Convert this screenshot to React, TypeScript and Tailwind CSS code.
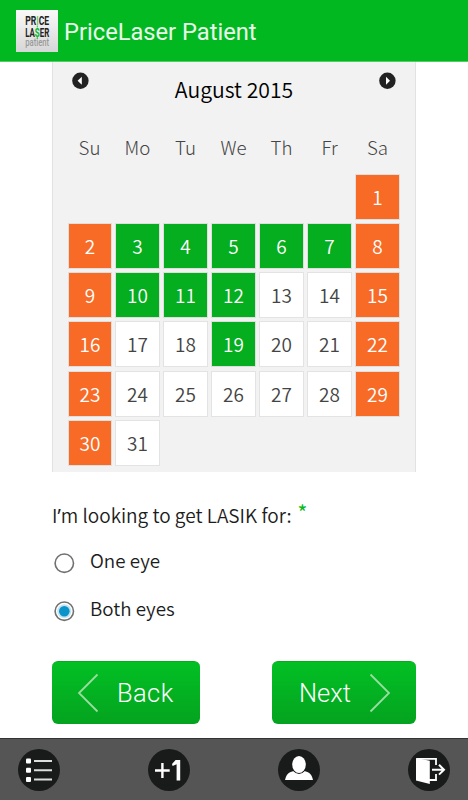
import type { ReactNode } from 'react';

const cjk = "font-['Noto_Sans_CJK_SC','Noto_Sans',sans-serif]";
const closed = [1, 2, 8, 9, 15, 16, 22, 23, 29, 30];
const open = [3, 4, 5, 6, 7, 10, 11, 12, 19];

function Logo() {
  return (
    <svg width="42" height="42" viewBox="0 0 42 42" className="shrink-0">
      <defs>
        <linearGradient id="tile" x1="0" y1="0" x2="0" y2="1">
          <stop offset="0" stopColor="#fafafa" />
          <stop offset="1" stopColor="#d6d6d6" />
        </linearGradient>
      </defs>
      <rect width="42" height="42" fill="url(#tile)" />
      <g fontFamily="'Roboto', sans-serif" fontWeight="700" fontSize="13.5" fill="#222">
        <text x="9.2" y="15" textLength="24" lengthAdjust="spacingAndGlyphs">
          PR<tspan fill="#20c541" fontWeight="400">I</tspan>CE
        </text>
        <text x="9.2" y="27" textLength="24" lengthAdjust="spacingAndGlyphs">
          LA<tspan fill="#08b92a">S</tspan>ER
        </text>
        <text x="9.2" y="36" fontSize="11" fontWeight="500" textLength="24" lengthAdjust="spacingAndGlyphs" fill="#999">patient</text>
      </g>
      <path d="M21.3 15.5V17.5M21.3 27V29" stroke="#20c541" strokeWidth="1" />
    </svg>
  );
}

function MonthArrow({ next = false }: { next?: boolean }) {
  return (
    <svg width="18" height="18" viewBox="0 0 18 18">
      <circle cx={next ? 8.4 : 9.4} cy="8.8" r="8.2" fill="#222" />
      <path d={next ? 'M7 4.8V12.8L11 8.8Z' : 'M10.8 4.8V12.8L6.6 8.8Z'} fill="#fff" />
    </svg>
  );
}

function Day({ day }: { day: number }) {
  const tone = closed.includes(day)
    ? 'bg-[#f76b27] text-white border-[#e2dedc]'
    : open.includes(day)
      ? 'bg-[#04ae1e] text-white border-[#dcdfdc]'
      : 'bg-white text-[#444] border-[#e3e3e3]';
  return (
    <div className={`flex h-[46px] items-center justify-center border-[1.5px] pb-px text-[19px] leading-none ${tone}`}>
      {day}
    </div>
  );
}

function Radio({ label, checked = false }: { label: string; checked?: boolean }) {
  return (
    <label className="flex h-12 items-center">
      <svg width="22" height="22" viewBox="0 0 22 22" className="mt-[3px] ml-px">
        <circle cx="11.3" cy="11.2" r="9.2" fill="#fff" stroke="#707070" strokeWidth="1.6" />
        {checked && <circle cx="11.3" cy="11.2" r="7" fill="#c5e4f0" />}
        {checked && <circle cx="11.3" cy="11.2" r="5.3" fill="#0a94ca" />}
      </svg>
      <span className="ml-[15px] pb-px text-[18.8px] leading-none">{label}</span>
    </label>
  );
}

function Round({ children }: { children: ReactNode }) {
  return (
    <svg width="42" height="42" viewBox="0 0 42 42">
      <circle cx="21" cy="21" r="21" fill="#191b1a" />
      {children}
    </svg>
  );
}

export default function App() {
  return (
    <div className={`flex h-[800px] w-[468px] flex-col overflow-hidden bg-white font-[350] text-[#1c1c1c] ${cjk}`}>
      <header className="flex h-[62px] shrink-0 items-center border-b border-[#55cd64] bg-[#02b821] pl-4">
        <Logo />
        <h1 className="ml-[6px] pt-[4px] font-['Roboto',sans-serif] text-[23.7px] leading-none font-normal whitespace-nowrap text-[#eaf8ec]">
          PriceLaser Patient
        </h1>
      </header>

      <section className="mx-[52px] h-[410px] shrink-0 border-x border-[#e2e2e2] bg-[#f2f2f2]">
        <div className="flex h-[66px] justify-between px-[18px] pt-[10px]">
          <MonthArrow />
          <h2 className="pt-[4px] text-[21.2px] leading-[26px] font-[350] text-black">August 2015</h2>
          <MonthArrow next />
        </div>
        <div className="ml-[13px] grid h-[45px] w-[336px] grid-cols-7 pt-[6px] text-center text-[18.7px] leading-[26px] font-light text-[#444]">
          {['Su', 'Mo', 'Tu', 'We', 'Th', 'Fr', 'Sa'].map((d) => (
            <span key={d} className="pr-px">{d}</span>
          ))}
        </div>
        <div className="mt-[0.6px] ml-[15px] grid w-[332px] grid-cols-[44px_repeat(6,45px)] gap-x-[3px] gap-y-[3.3px]">
          <span className="col-span-6" />
          {Array.from({ length: 31 }, (_, i) => (
            <Day key={i} day={i + 1} />
          ))}
        </div>
      </section>

      <section className="mx-[52px] flex h-[266px] shrink-0 flex-col">
        <div className="flex pt-[29px] text-[19px] leading-[28px]">
          <span className="whitespace-nowrap">
            I<span className="font-['Noto_Sans',sans-serif] font-normal">’</span>m looking to get LASIK for:
          </span>
          <span className="-mt-[3px] ml-[6px] text-[21px] font-normal text-[#08b918]">*</span>
        </div>
        <div className="mt-[7px]">
          <Radio label="One eye" />
          <Radio label="Both eyes" checked />
        </div>
        <div className="mt-[28px] flex justify-between font-['Roboto',sans-serif] text-[25.5px] font-light text-white">
          <button className="flex h-[63px] w-[148px] items-center rounded-[6px] border-t border-[#08aa20] bg-linear-to-b from-[#02c024] to-[#04a31f] pl-[25px] font-light tracking-[0.4px]">
            <svg width="22" height="40" viewBox="0 0 22 40" className="shrink-0">
              <path d="M20.5 1.5L2 20L20.5 38.5" fill="none" stroke="#98de9f" strokeWidth="1.8" />
            </svg>
            <span className="ml-[18px]">Back</span>
          </button>
          <button className="flex h-[63px] w-[144px] items-center rounded-[6px] border-t border-[#08aa20] bg-linear-to-b from-[#02c024] to-[#04a31f] pl-[27px] font-light">
            <span className="w-[70px] text-left">Next</span>
            <svg width="22" height="40" viewBox="0 0 22 40" className="shrink-0">
              <path d="M1.5 1.5L20 20L1.5 38.5" fill="none" stroke="#98de9f" strokeWidth="1.8" />
            </svg>
          </button>
        </div>
      </section>

      <nav className="flex h-[62px] shrink-0 items-center justify-between border-t border-[#333] bg-[#555] px-[18px] pt-px">
        <Round>
          <g fill="#fff">
            <rect x="8" y="9.5" width="5" height="5" rx="1" />
            <rect x="8" y="18.7" width="5" height="5" rx="1" />
            <rect x="8" y="28" width="5" height="5" rx="1" />
          </g>
          <path d="M16 12H34M16 21.2H34M16 30.5H34" stroke="#ddd" strokeWidth="2" />
        </Round>
        <Round>
          <path d="M7 21.5H21.7M14.4 14V29" stroke="#fff" strokeWidth="2.4" />
          <path d="M24 15L27.6 11H32.2V31.5H28.6V15.2L24.6 17Z" fill="#fff" />
        </Round>
        <Round>
          <path d="M7 31Q8 25.3 12 23.2L17 21.4Q21 26 25 21.4L30 23.2Q34 25.3 35 31Z" fill="#fff" />
          <ellipse cx="21" cy="15.5" rx="7.7" ry="9.6" fill="#191b1a" />
          <ellipse cx="21" cy="15.5" rx="6.8" ry="8.6" fill="#fff" />
        </Round>
        <Round>
          <path d="M9 9.8H28V16M28 25V31H21" fill="none" stroke="#fff" strokeWidth="1.8" />
          <path d="M8 8.9L21.8 11.7V35L8 31.5Z" fill="#fff" />
          <path d="M24 20.7H36M31 15.8L36 20.7L31 25.6" fill="none" stroke="#fff" strokeWidth="2" />
        </Round>
      </nav>
    </div>
  );
}
